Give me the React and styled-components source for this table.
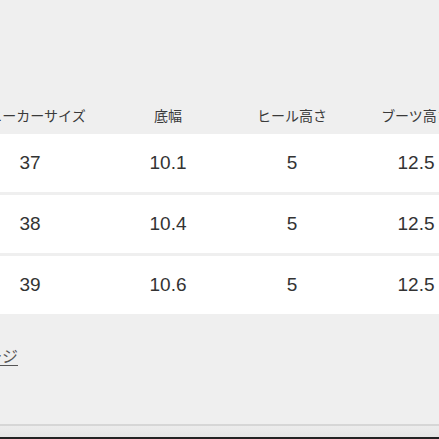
import React from "react";
import styled, { createGlobalStyle } from "styled-components";

const Global = createGlobalStyle`
  html, body { margin: 0; padding: 0; background: #efefef; overflow: hidden; }
  body { font-family: "Liberation Sans", "Noto Sans CJK JP", sans-serif; color: #333; }
`;

const Page = styled.div`
  width: 439px;
  height: 439px;
  display: flex;
  flex-direction: column;
  overflow: hidden;
  background: #efefef;
`;

const Table = styled.div`
  margin-top: 96px;
  margin-left: -46px;
  width: 524px;
  display: flex;
  flex-direction: column;
  gap: 3px;
`;

const Row = styled.div`
  display: grid;
  grid-template-columns: 152px 124px 124px 124px;
  height: ${(p) => (p.$head ? "38px" : "58px")};
  background: ${(p) => (p.$head ? "#efefef" : "#fff")};
  margin-bottom: ${(p) => (p.$head ? "-3px" : "0")};
`;

const Cell = styled.div`
  display: flex;
  align-items: center;
  justify-content: center;
  white-space: nowrap;
  font-size: ${(p) => (p.$head ? "14px" : "19px")};
  color: ${(p) => (p.$head ? "#3a3a3a" : "#333")};
  font-family: ${(p) =>
    p.$head
      ? `"Noto Sans CJK JP", sans-serif`
      : `"Liberation Sans", "Noto Sans CJK JP", sans-serif`};
`;

const LinkRow = styled.div`
  margin-top: 30px;
  margin-left: -100px;
  width: 118px;
  display: flex;
  justify-content: flex-end;
`;

const Link = styled.a`
  font-family: "Noto Sans CJK JP", sans-serif;
  font-size: 16px;
  line-height: 22px;
  color: #555;
  text-decoration: underline;
  text-underline-offset: 3px;
  white-space: nowrap;
`;

const Footer = styled.div`
  margin-top: auto;
  height: 15px;
  display: flex;
  flex-direction: column;
`;

const FooterLine = styled.div`
  height: 2px;
  background: #d6d6d6;
`;

const FooterBody = styled.div`
  flex: 1;
  background: linear-gradient(#ececec, #e5e5e5);
`;

const FooterEdge = styled.div`
  height: 2px;
  background: #222;
`;

const headers = ["スニーカーサイズ", "底幅", "ヒール高さ", "ブーツ高さ"];
const rows = [
  ["37", "10.1", "5", "12.5"],
  ["38", "10.4", "5", "12.5"],
  ["39", "10.6", "5", "12.5"],
];

export default function App() {
  return (
    <Page>
      <Global />
      <Table>
        <Row $head>
          {headers.map((h) => (
            <Cell $head key={h}>{h}</Cell>
          ))}
        </Row>
        {rows.map((r, i) => (
          <Row key={i}>
            {r.map((c, j) => (
              <Cell key={j}>{c}</Cell>
            ))}
          </Row>
        ))}
      </Table>
      <LinkRow>
        <Link href="#">サイズページ</Link>
      </LinkRow>
      <Footer>
        <FooterLine />
        <FooterBody />
        <FooterEdge />
      </Footer>
    </Page>
  );
}
